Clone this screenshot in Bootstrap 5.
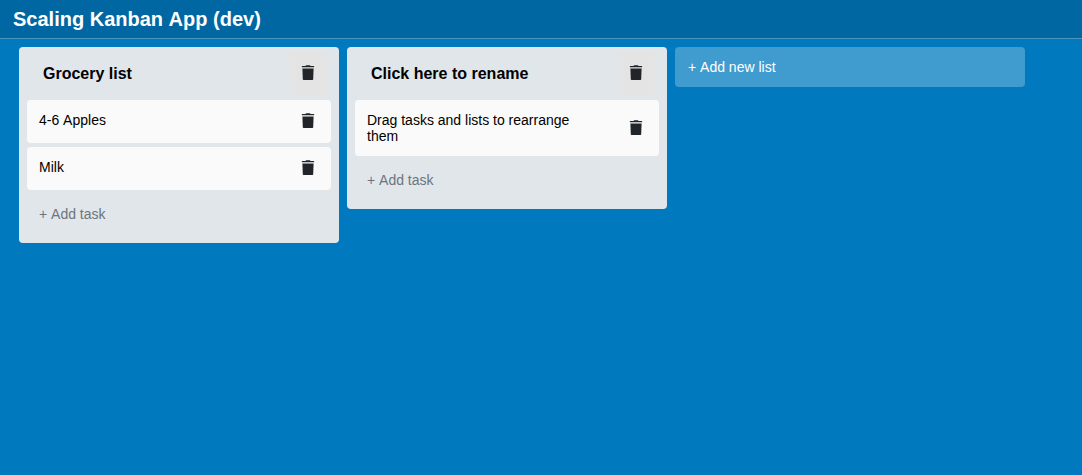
<!DOCTYPE html>
<html lang="en">
<head>
<meta charset="utf-8">
<title>Scaling Kanban App (dev)</title>
<link href="https://cdn.jsdelivr.net/npm/bootstrap@5.3.0/dist/css/bootstrap.min.css" rel="stylesheet">
<style>
body { background: #0079bf; color: #000; font: 14px/16px "Liberation Sans", Arial, sans-serif; font-kerning: none; }
.app-bar { height: 39px; padding: 0 13px; background: #0067a3; border-bottom: 1px solid #4d95ba; }
.app-bar h1 { font-size: 20px; line-height: 24px; font-weight: 700; }
.board { padding: 8px 19px; gap: 8px; }
.board-list { width: 320px; padding: 4px 8px 8px; background: #e1e6ea; border-radius: 4px; }
.list-head { height: 45px; padding: 0 4px 0 16px; margin-bottom: 4px; }
.list-head h2 { font-size: 16px; line-height: 18px; font-weight: 700; }
.task { min-height: 43px; padding: 0 4px 0 12px; margin-bottom: 4px; background: #fafafa; border-radius: 4px; }
.task p { width: 222px; padding: 12px 0; }
.task-row-text { min-height: 43px; }
.icon-btn { width: 38px; height: 43px; padding: 0 0 2px; border: 0; border-radius: 4px; background: none; color: #212529; }
.icon-btn svg { width: 14px; height: 15px; }
.task-tall .icon-btn { padding-bottom: 1px; }
.list-head .icon-btn { height: 45px; background: #e4e4e4; }
.add-task { height: 41px; padding: 12px; color: #6c757d; }
.add-list { width: 350px; height: 40px; padding: 12px 13px; background: #409bcf; color: #fff; border-radius: 4px; }
</style>
<script src="https://cdn.jsdelivr.net/npm/bootstrap@5.3.0/dist/js/bootstrap.bundle.min.js"></script>
</head>
<body>
<svg class="d-none"><symbol id="trash" viewBox="0 0 14 15"><path fill="currentColor" d="M4.400 1 4.800.4Q5 .2 5.300.2h3.400Q9 .2 9.200.4L9.600 1H12.800Q13.200 1 13.200 1.400V2.200H.8V1.400Q.8 1 1.200 1ZM1.400 3.500h11.200L12.200 14.200Q12.100 15 11.500 15H2.500Q1.900 15 1.800 14.200Z"/></symbol></svg>
<header class="app-bar d-flex align-items-center"><h1 class="m-0 text-white">Scaling Kanban App (dev)</h1></header>
<main class="board d-flex align-items-start">
  <section class="board-list flex-shrink-0">
    <div class="list-head d-flex align-items-center justify-content-between"><h2 class="m-0">Grocery list</h2><button class="icon-btn d-flex align-items-center justify-content-center" aria-label="Delete list"><svg><use href="#trash"/></svg></button></div>
    <div class="task d-flex align-items-center justify-content-between"><p class="task-row-text m-0">4-6 Apples</p><button class="icon-btn d-flex align-items-center justify-content-center" aria-label="Delete task"><svg><use href="#trash"/></svg></button></div>
    <div class="task d-flex align-items-center justify-content-between"><p class="task-row-text m-0">Milk</p><button class="icon-btn d-flex align-items-center justify-content-center" aria-label="Delete task"><svg><use href="#trash"/></svg></button></div>
    <div class="add-task">+ Add task</div>
  </section>
  <section class="board-list flex-shrink-0">
    <div class="list-head d-flex align-items-center justify-content-between"><h2 class="m-0">Click here to rename</h2><button class="icon-btn d-flex align-items-center justify-content-center" aria-label="Delete list"><svg><use href="#trash"/></svg></button></div>
    <div class="task task-tall d-flex align-items-center justify-content-between"><p class="m-0">Drag tasks and lists to rearrange them</p><button class="icon-btn d-flex align-items-center justify-content-center" aria-label="Delete task"><svg><use href="#trash"/></svg></button></div>
    <div class="add-task">+ Add task</div>
  </section>
  <div class="add-list flex-shrink-0">+ Add new list</div>
</main>
</body>
</html>
